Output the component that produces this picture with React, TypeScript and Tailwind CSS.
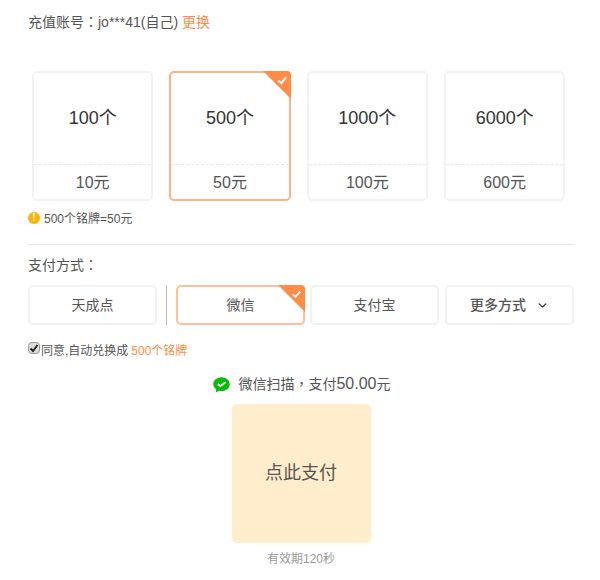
import { ChevronDown } from "lucide-react";

const packs = [
  { count: "100个", price: "10元" },
  { count: "500个", price: "50元", active: true },
  { count: "1000个", price: "100元" },
  { count: "6000个", price: "600元" },
];

// full-width punctuation sits centred in the TC cut, as in the picture
const tcPunct = "font-['Liberation_Sans','Noto_Sans_CJK_TC',sans-serif]";

function Corner({ size }: { size: number }) {
  return (
    <svg className="absolute -top-0.5 -right-0.5" width={size} height={size} viewBox="0 0 28 28">
      <path d="M0 0H24Q28 0 28 4V28Z" fill="#ff8c47" />
      <path d="M15 9.5L18.2 12.2L23 6.5" fill="none" stroke="#fff" strokeWidth="2" />
    </svg>
  );
}

function PayButton({ label, active, bold }: { label: string; active?: boolean; bold?: boolean }) {
  return (
    <button
      className={`relative flex h-10 w-[129px] items-center justify-center rounded-[5px] border-2 text-[14px] ${
        active ? "border-[#ffc19b] text-[#555]" : "border-[#f2f2f2] text-[#555]"
      } ${bold ? "font-medium text-[#333]" : ""}`}
    >
      {label}
      {bold && <ChevronDown className="ml-2.5 text-[#333]" size={13} strokeWidth={2.5} />}
      {active && <Corner size={27} />}
    </button>
  );
}

export default function App() {
  return (
    <div className="h-[580px] w-[600px] overflow-hidden bg-white pl-7 pr-[25px] pt-3 font-['Liberation_Sans','Noto_Sans_CJK_SC',sans-serif] text-[#555]">
      <div className="h-5 text-[14px] leading-5">
        充值账号<span className={tcPunct}>：</span>jo***41(自己) <span className="text-[#ff8c47]">更换</span>
      </div>

      {/* packs */}
      <div className="mt-[39px] ml-1 flex gap-4">
        {packs.map((p) => (
          <div
            key={p.count}
            className={`relative h-[130px] w-[121.33px] rounded-[5px] border-2 ${
              p.active ? "border-[#ffb285]" : "border-[#f2f2f2]"
            }`}
          >
            <div className="flex h-[92px] items-center justify-center border-b border-dashed border-[#e6e6e6] text-[18px] text-[#333]">
              {p.count}
            </div>
            <div className="flex h-[35px] items-center justify-center text-[16px]">{p.price}</div>
            {p.active && <Corner size={28} />}
          </div>
        ))}
      </div>

      <div className="mt-2.5 flex h-4 items-center text-[12px] text-[#555]">
        <span className="-mt-0.5 flex h-3 w-3 items-center justify-center rounded-full bg-[#ffb400] text-[10px] font-bold leading-none text-white">
          !
        </span>
        <span className="ml-1">500个铭牌=50元</span>
      </div>

      <div className="mt-[17px] h-px bg-[#e8e8e8]" />

      <div className="mt-2.5 h-5 text-[14px] leading-5">
        支付方式<span className={tcPunct}>：</span>
      </div>

      {/* payment methods */}
      <div className="mt-2.5 flex items-center">
        <PayButton label="天成点" />
        <div className="mx-[9px] h-10 w-px bg-[#bbb]" />
        <PayButton label="微信" active />
        <div className="w-[5px]" />
        <PayButton label="支付宝" />
        <div className="w-1.5" />
        <PayButton label="更多方式" bold />
      </div>

      <label className="mt-[17px] flex h-[17px] items-center text-[12px]">
        <span className="-mt-1.5 flex h-3 w-3 items-center justify-center rounded-sm border border-[#999] bg-[#ddd]">
          <svg width="10" height="10" viewBox="0 0 10 10">
            <path d="M1.5 5.5L4 8L8.5 2" fill="none" stroke="#222" strokeWidth="2" />
          </svg>
        </span>
        <span className="ml-px">同意,自动兑换成</span>
        <span className="ml-[3px] text-[#ff8c47]">500个铭牌</span>
      </label>

      {/* scan */}
      <div className="mt-[15px] flex flex-col items-center pr-px">
        <div className="ml-0.5 flex h-5 items-center text-[14px]">
          <svg width="17" height="16" viewBox="0 0 17 16" className="mr-2 mt-0.5">
            <path d="M8.5 0.3C4 0.3 0.3 3.3 0.3 7.2C0.3 9.3 1.4 11 3.2 12.2L2.8 15.5L5.8 13.7C6.7 14 7.5 14.1 8.5 14.1C13 14.1 16.7 11.1 16.7 7.2C16.7 3.3 13 0.3 8.5 0.3Z" fill="#09bb07" />
            <path d="M4.8 7L7.3 9.2L12.6 5.2" fill="none" stroke="#fff" strokeWidth="1.7" />
          </svg>
          微信扫描<span className={tcPunct}>，</span>支付<span className="text-[16px]">50.00</span>元
        </div>
        <div className="mt-[10px] flex h-[139px] w-[139px] items-center justify-center rounded-[5px] bg-[#ffedcc] text-[18px] text-[#555]">
          点此支付
        </div>
        <div className="mt-[7px] text-[12px] text-[#999]">有效期120秒</div>
      </div>
    </div>
  );
}
